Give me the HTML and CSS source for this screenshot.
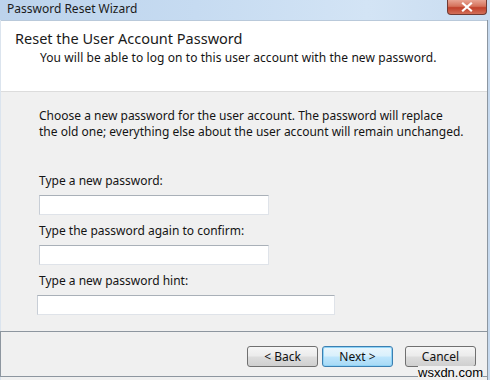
FILE: index.html
```html
<!DOCTYPE html>
<html>
<head>
<meta charset="utf-8">
<link rel="stylesheet" href="styles.css">
</head>
<body>
<div class="window">
  <div class="titlebar">
    <span class="title">Password Reset Wizard</span>
    <div class="close"><svg width="14" height="10" viewBox="0 0 14 10"><path d="M3 1.5 L11 8.5 M11 1.5 L3 8.5" stroke="#fff" stroke-width="2.2" stroke-linecap="square"/></svg></div>
  </div>
  <div class="client">
    <div class="header">
      <div class="h-title">Reset the User Account Password</div>
      <div class="h-sub">You will be able to log on to this user account with the new password.</div>
    </div>
    <div class="body">
      <p class="para">Choose a new password for the user account. The password will replace<br>the old one; everything else about the user account will remain unchanged.</p>
      <div class="label first">Type a new password:</div>
      <div class="input"></div>
      <div class="label">Type the password again to confirm:</div>
      <div class="input"></div>
      <div class="label">Type a new password hint:</div>
      <div class="input wide"></div>
    </div>
    <div class="footer">
      <div class="btn">&lt; Back</div>
      <div class="btn default">Next &gt;</div>
      <div class="btn cancel">Cancel</div>
    </div>
  </div>
  <div class="watermark">wsxdn.com</div>
</div>
</body>
</html>
```
FILE: styles.css
```css
html, body {
  margin: 0;
  padding: 0;
}
body {
  width: 490px;
  height: 380px;
  overflow: hidden;
  background: #c6d9ee;
  font-family: "Noto Sans", "Open Sans", sans-serif;
  font-size: 12px;
  color: #141414;
}
.window {
  position: relative;
  width: 490px;
  height: 380px;
  display: flex;
  flex-direction: column;
}
.titlebar {
  height: 20px;
  flex: none;
  display: flex;
  align-items: flex-start;
  justify-content: space-between;
  background: linear-gradient(90deg, #bcd3ec 0%, #c6dbf1 40%, #d3e4f5 75%, #c9dcf0 100%);
}
.title {
  padding-left: 7px;
  line-height: 18px;
  font-size: 12px;
  color: #1b1b1b;
}
.close {
  width: 40px;
  height: 15px;
  margin-right: 3px;
  box-sizing: border-box;
  border: 1px solid #6f3a33;
  border-top: none;
  border-radius: 0 0 4px 4px;
  background: linear-gradient(180deg, #e8a493 0%, #d5725b 45%, #c0402a 55%, #d2705a 100%);
  display: flex;
  align-items: center;
  justify-content: center;
}
.client {
  flex: 1;
  margin: 0 2px 0 0;
  border-left: 1px solid #dbe4ee;
  border-right: 1px solid #8c96a0;
  background: #f0f0f0;
  display: flex;
  flex-direction: column;
}
.header {
  height: 72px;
  flex: none;
  box-sizing: border-box;
  background: #fff;
  border-top: 1px solid #b9c9da;
  border-bottom: 1px solid #dcdcdc;
  padding: 6px 0 0 14px;
}
.h-title {
  font-size: 14.5px;
  line-height: 22px;
  color: #1a1a1a;
}
.h-sub {
  padding-left: 25px;
  line-height: 16px;
  margin-top: 1px;
  letter-spacing: 0.08px;
}
.body {
  flex: 1;
  padding: 16px 0 0 38px;
}
.para {
  margin: 0;
  line-height: 16px;
}
.label {
  line-height: 16px;
  margin-top: 8px;
}
.label.first {
  margin-top: 33px;
}
.input {
  width: 230px;
  height: 20px;
  box-sizing: border-box;
  margin-top: 6px;
  background: #fff;
  border: 1px solid #dfe3e9;
  border-top-color: #a9b0b8;
  border-left-color: #c8ced6;
}
.input.wide {
  width: 298px;
  margin-left: -2px;
}
.footer {
  height: 46px;
  flex: none;
  box-sizing: border-box;
  margin: 0 -1px 3px -1px;
  border: 1px solid #8d969f;
  background: #f0f0f0;
  display: flex;
  justify-content: flex-end;
  align-items: flex-start;
  padding: 14px 11px 0 0;
  gap: 4px;
}
.btn {
  width: 71px;
  height: 21px;
  box-sizing: border-box;
  border: 1px solid #707070;
  border-radius: 3px;
  background: linear-gradient(180deg, #f6f6f6 0%, #ebebeb 48%, #dddddd 52%, #cfcfcf 100%);
  text-align: center;
  line-height: 19px;
  color: #111;
}
.btn.default {
  border-color: #3c7fb1;
  background: linear-gradient(180deg, #eaf6fd 0%, #d9f0fc 48%, #bee6fd 52%, #a7d9f5 100%);
  box-shadow: inset 0 0 0 1px #8fd3f6;
}
.btn.cancel {
  margin-left: 8px;
}
.watermark {
  position: absolute;
  left: 418px;
  top: 366px;
  font-family: "Liberation Sans", Arial, sans-serif;
  font-size: 13px;
  line-height: 13px;
  color: #000;
  background: #f0f0f0;
}
```
